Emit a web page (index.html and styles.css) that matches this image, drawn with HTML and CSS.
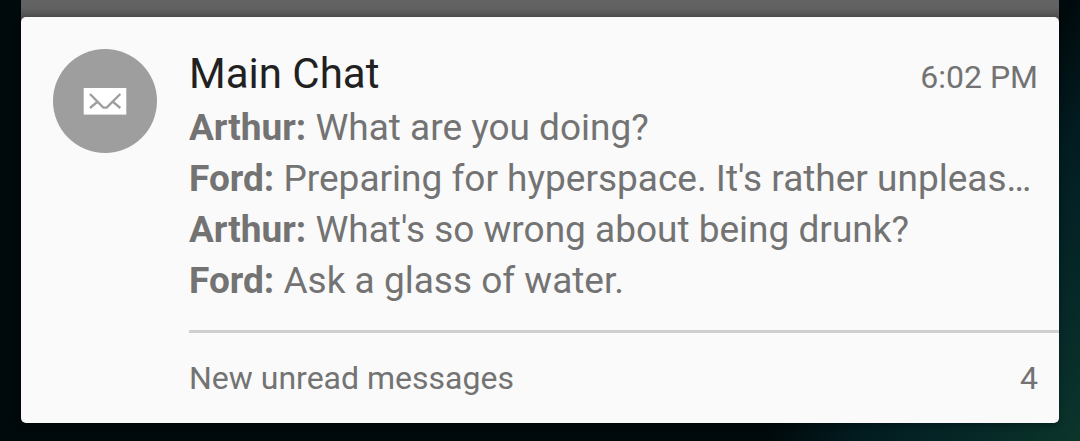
FILE: index.html
```html
<!DOCTYPE html>
<html lang="en">
<head>
<meta charset="utf-8">
<title>Main Chat</title>
<link rel="stylesheet" href="styles.css">
</head>
<body>
<div class="previous"></div>
<article class="card">
  <div class="avatar">
    <svg class="mail" viewBox="0 0 44 28" aria-hidden="true">
      <rect x="0.7" y="1" width="42.6" height="26.6" fill="#fff"/>
      <path d="M7 7 L20.3 20.6 H23.7 L37.3 7 M7 21 L14.6 14.6 M37.3 21 L29.8 14.6" fill="none" stroke="#9e9e9e" stroke-width="2.4"/>
    </svg>
  </div>
  <div class="content">
    <header class="header">
      <h1 class="title">Main Chat</h1>
      <time class="time">6:02 PM</time>
    </header>
    <ul class="messages">
      <li class="message"><b>Arthur:</b> What are you doing?</li>
      <li class="message"><b>Ford:</b> Preparing for hyperspace. It's rather unpleas…</li>
      <li class="message"><b>Arthur:</b> What's so wrong about being drunk?</li>
      <li class="message"><b>Ford:</b> Ask a glass of water.</li>
    </ul>
    <footer class="summary">
      <span>New unread messages</span>
      <span>4</span>
    </footer>
  </div>
</article>
</body>
</html>
```

FILE: styles.css
```css
* {
  box-sizing: border-box;
}

body {
  margin: 0;
  padding: 0 21px 18px;
  min-height: 100vh;
  background: linear-gradient(125deg, #00090b 0%, #00090b 77%, #021c20 84%, #062827 92%, #0c352b 100%);
  font-family: Roboto, "Liberation Sans", sans-serif;
  color: #737373;
}

.previous {
  height: 17px;
  margin-bottom: -5px;
  padding-bottom: 5px;
  box-sizing: content-box;
  background: linear-gradient(#636363 0, #616161 8px, #525252 17px);
}

.card {
  position: relative;
  display: flex;
  gap: 32px;
  padding: 32px 0 0 32px;
  border-radius: 5px;
  background: #fafafa;
  box-shadow: 0 2px 6px rgba(0, 0, 0, 0.3);
}

.avatar {
  display: flex;
  flex: none;
  align-items: center;
  justify-content: center;
  width: 104px;
  height: 104px;
  border-radius: 50%;
  background: #9e9e9e;
}

.mail {
  width: 44px;
  height: 28px;
}

.content {
  flex: 1;
  min-width: 0;
}

.header {
  display: flex;
  align-items: baseline;
  justify-content: space-between;
  padding: 0 21px 3px 0;
}

.title {
  margin: 0;
  font-size: 42px;
  font-weight: 400;
  line-height: 50px;
  color: #212121;
}

.time {
  font-size: 32px;
}

.messages {
  margin: 0;
  padding: 0 21px 0 0;
  list-style: none;
}

.message {
  overflow: hidden;
  font-size: 37px;
  line-height: 51px;
  white-space: nowrap;
  text-overflow: ellipsis;
}

.summary {
  display: flex;
  justify-content: space-between;
  margin-top: 24px;
  padding-right: 21px;
  border-top: 3px solid #cfcfcf;
  font-size: 32px;
  line-height: 90px;
}
```
